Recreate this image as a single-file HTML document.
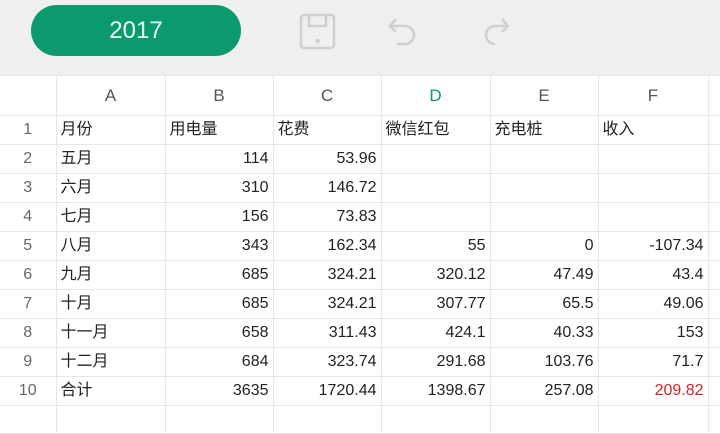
<!DOCTYPE html>
<html><head><meta charset="utf-8"><style>
body{margin:0;width:720px;height:409px;overflow:hidden;background:#fff;font-family:"Liberation Sans","Noto Sans CJK SC",sans-serif;}
.tb{position:absolute;left:0;top:0;width:720px;height:75px;background:#efefef;}
.pill{position:absolute;left:31px;top:5px;width:210px;height:51px;border-radius:26px;background:#0a9a6e;color:#e8fff5;font-size:24px;line-height:51px;text-align:center;}
table{position:absolute;left:0;top:75px;border-collapse:collapse;table-layout:fixed;width:740px;}
td{border:1px solid #e6e6e6;height:28px;line-height:28px;padding:0 4px;font-size:16px;color:#222;white-space:nowrap;overflow:hidden;vertical-align:middle;box-sizing:border-box;}
tr.h td{height:40px;line-height:38px;text-align:center;color:#555;font-size:17px;}
td.n{text-align:center;color:#666;border-left:none;padding:0;}
td.r{text-align:right;}
</style></head><body>
<div class="tb">
<div class="pill">2017</div>
<svg style="position:absolute;left:298px;top:12px" width="40" height="40" viewBox="0 0 40 40" fill="none" stroke="#cfcfcf" stroke-width="2.5"><rect x="3" y="3" width="33" height="33" rx="3"/><path d="M11 3v11h17V3"/><circle cx="19.5" cy="29" r="1" fill="#cfcfcf"/></svg>
<svg style="position:absolute;left:384px;top:14px" width="40" height="40" viewBox="0 0 40 40" fill="none" stroke="#cfcfcf" stroke-width="2.5"><path d="M7 12h14a9 9 0 0 1 0 18h-8"/><path d="M12 5l-6 7 6 6"/></svg>
<svg style="position:absolute;left:474px;top:14px" width="40" height="40" viewBox="0 0 40 40" fill="none" stroke="#cfcfcf" stroke-width="2.5"><path d="M33 12H21a9 9 0 0 0 0 18"/><path d="M28 5l6 7-6 6"/></svg>
</div>
<table>
<colgroup><col style="width:56px"><col style="width:109px"><col style="width:108px"><col style="width:108px"><col style="width:109px"><col style="width:108px"><col style="width:110px"><col style="width:32px"></colgroup>
<tr class="h"><td class="n"></td><td>A</td><td>B</td><td>C</td><td style="color:#0a9a6e">D</td><td>E</td><td>F</td><td></td></tr>
<tr><td class="n">1</td><td>月份</td><td>用电量</td><td>花费</td><td>微信红包</td><td>充电桩</td><td>收入</td><td></td></tr>
<tr><td class="n">2</td><td>五月</td><td class="r">114</td><td class="r">53.96</td><td></td><td></td><td></td><td></td></tr>
<tr><td class="n">3</td><td>六月</td><td class="r">310</td><td class="r">146.72</td><td></td><td></td><td></td><td></td></tr>
<tr><td class="n">4</td><td>七月</td><td class="r">156</td><td class="r">73.83</td><td></td><td></td><td></td><td></td></tr>
<tr><td class="n">5</td><td>八月</td><td class="r">343</td><td class="r">162.34</td><td class="r">55</td><td class="r">0</td><td class="r">-107.34</td><td></td></tr>
<tr><td class="n">6</td><td>九月</td><td class="r">685</td><td class="r">324.21</td><td class="r">320.12</td><td class="r">47.49</td><td class="r">43.4</td><td></td></tr>
<tr><td class="n">7</td><td>十月</td><td class="r">685</td><td class="r">324.21</td><td class="r">307.77</td><td class="r">65.5</td><td class="r">49.06</td><td></td></tr>
<tr><td class="n">8</td><td>十一月</td><td class="r">658</td><td class="r">311.43</td><td class="r">424.1</td><td class="r">40.33</td><td class="r">153</td><td></td></tr>
<tr><td class="n">9</td><td>十二月</td><td class="r">684</td><td class="r">323.74</td><td class="r">291.68</td><td class="r">103.76</td><td class="r">71.7</td><td></td></tr>
<tr><td class="n">10</td><td>合计</td><td class="r">3635</td><td class="r">1720.44</td><td class="r">1398.67</td><td class="r">257.08</td><td class="r" style="color:#d0262b">209.82</td><td></td></tr>
<tr><td class="n"></td><td></td><td></td><td></td><td></td><td></td><td></td><td></td></tr>
</table>
</body></html>
